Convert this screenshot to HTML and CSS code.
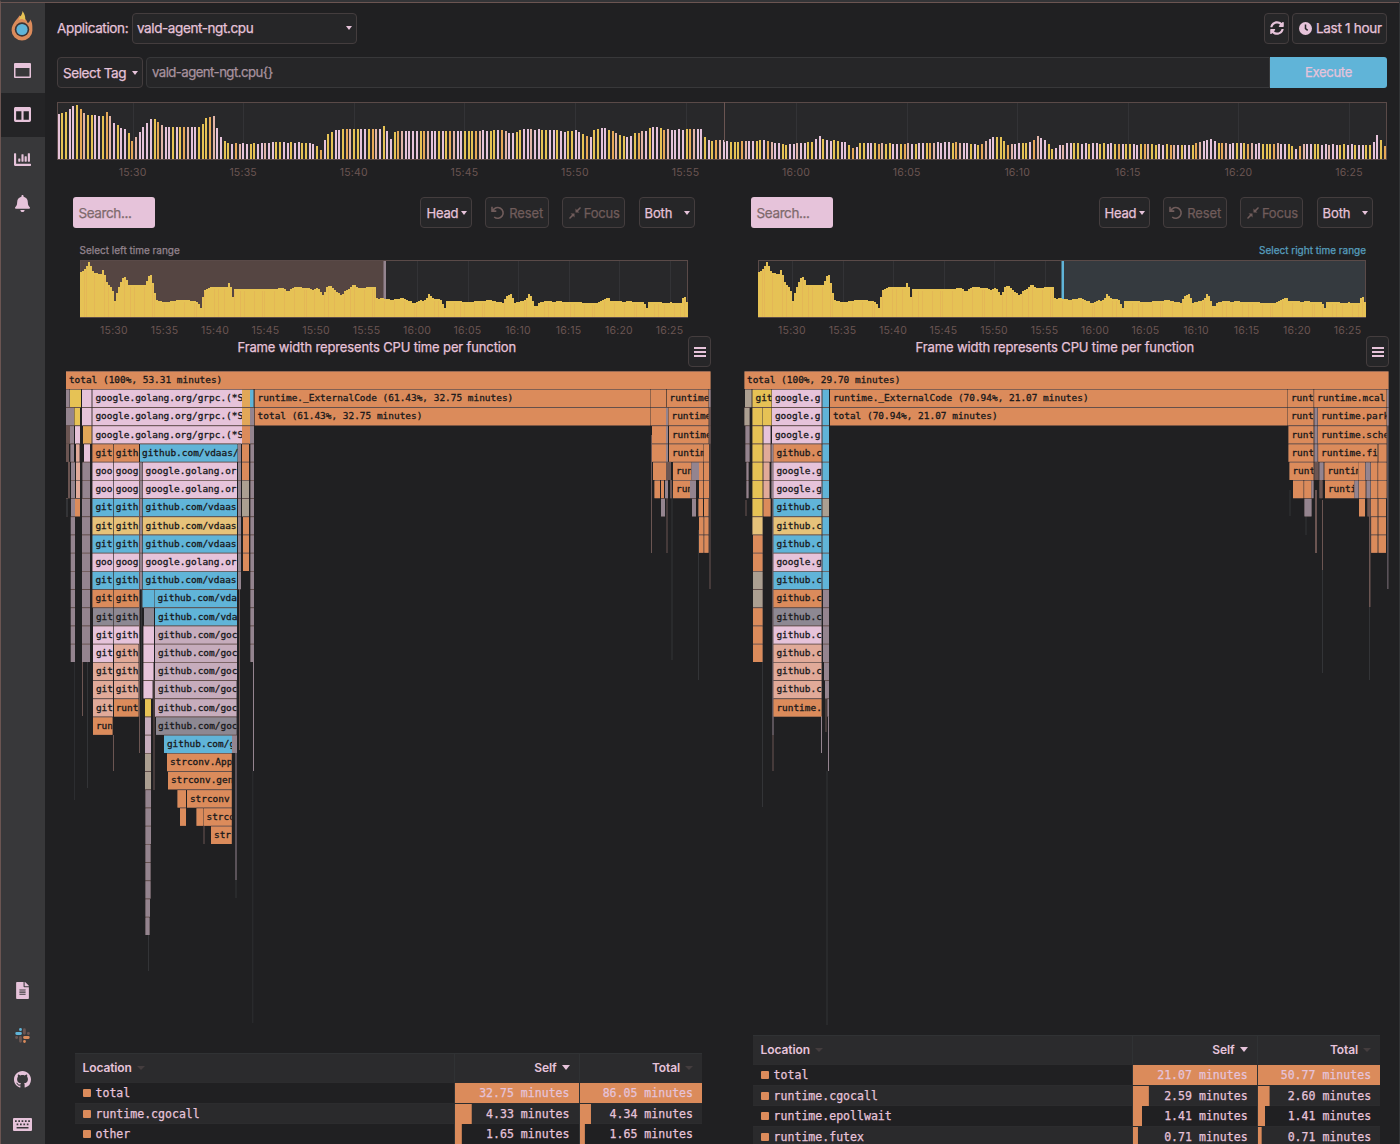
FILE: index.html
```html
<!DOCTYPE html>
<html lang="en">
<head>
<meta charset="utf-8">
<title>Pyroscope</title>
<link rel="stylesheet" href="styles.css">
</head>
<body>
<nav class="sidebar">
  <a class="side-item logo"><svg width="22" height="30" viewBox="0 0 22 30"><path class="o" d="M8.500 4.500C7 8 .6 12 .6 19.500a10.400 10 0 0 0 20.800 0c0-4 .3-8-2.200-11-.3 2-1.500 3.500-2.500 3.500C15.700 9 13.500 6 8.500 4.500z"/><path class="y" d="M11.500 0c2.500 3.500 3.300 6.500 2.500 9.500-2-2-4.500-2-6-.5C8.300 6.500 11.300 4 11.500 0z"/><circle class="d" cx="11" cy="18.500" r="7.200"/><circle class="b" cx="11" cy="18.500" r="5.600"/></svg></a>
  <a class="side-item"><svg width="17" height="15" viewBox="0 0 17 15"><path fill-rule="evenodd" d="M1 0h15a1 1 0 0 1 1 1v13a1 1 0 0 1-1 1H1a1 1 0 0 1-1-1V1a1 1 0 0 1 1-1zm.5 5v8.500h14V5z"/></svg></a>
  <a class="side-item active"><svg width="17" height="17" viewBox="0 0 512 512"><path d="M464 32H48C21.490 32 0 53.490 0 80v352c0 26.510 21.490 48 48 48h416c26.510 0 48-21.490 48-48V80c0-26.510-21.490-48-48-48zM224 416H64V160h160v256zm224 0H288V160h160v256z"/></svg></a>
  <a class="side-item"><svg width="17" height="17" viewBox="0 0 512 512"><path d="M332.800 320h38.400c6.400 0 12.800-6.400 12.800-12.800V172.800c0-6.400-6.400-12.800-12.800-12.800h-38.400c-6.400 0-12.800 6.400-12.800 12.800v134.400c0 6.400 6.400 12.800 12.800 12.800zm96 0h38.400c6.400 0 12.800-6.400 12.800-12.800V76.800c0-6.400-6.400-12.800-12.800-12.800h-38.400c-6.400 0-12.800 6.400-12.800 12.800v230.400c0 6.400 6.400 12.800 12.800 12.800zm-288 0h38.400c6.400 0 12.800-6.400 12.800-12.800v-70.400c0-6.400-6.400-12.800-12.800-12.800h-38.400c-6.400 0-12.800 6.400-12.800 12.800v70.400c0 6.400 6.400 12.800 12.800 12.800zm96 0h38.400c6.400 0 12.800-6.400 12.800-12.800V108.800c0-6.400-6.400-12.800-12.800-12.800h-38.400c-6.400 0-12.800 6.400-12.800 12.800v198.400c0 6.400 6.400 12.800 12.800 12.800zM496 384H64V80c0-8.840-7.160-16-16-16H16C7.160 64 0 71.160 0 80v336c0 17.670 14.330 32 32 32h464c8.840 0 16-7.160 16-16v-32c0-8.840-7.160-16-16-16z"/></svg></a>
  <a class="side-item"><svg width="15" height="17" viewBox="0 0 448 512"><path d="M224 512c35.320 0 63.970-28.650 63.970-64H160.030c0 35.350 28.650 64 63.970 64zm215.390-149.710c-19.320-20.760-55.470-51.990-55.470-154.290 0-77.700-54.480-139.900-127.940-155.160V32c0-17.670-14.320-32-31.980-32s-31.980 14.330-31.980 32v20.840C118.560 68.100 64.080 130.300 64.080 208c0 102.300-36.150 133.530-55.470 154.290-6 6.450-8.660 14.160-8.610 21.710.11 16.400 12.980 32 32.100 32h383.800c19.120 0 32-15.600 32.100-32 .05-7.550-2.610-15.270-8.610-21.710z"/></svg></a>
  <span class="side-space"></span>
  <a class="side-item"><svg width="13" height="17" viewBox="0 0 384 512"><path d="M224 136V0H24C10.700 0 0 10.700 0 24v464c0 13.300 10.700 24 24 24h336c13.300 0 24-10.700 24-24V160H248c-13.200 0-24-10.800-24-24zm64 236c0 6.600-5.400 12-12 12H108c-6.600 0-12-5.400-12-12v-8c0-6.600 5.400-12 12-12h168c6.600 0 12 5.400 12 12v8zm0-64c0 6.600-5.400 12-12 12H108c-6.600 0-12-5.400-12-12v-8c0-6.600 5.400-12 12-12h168c6.600 0 12 5.400 12 12v8zm0-72v8c0 6.600-5.400 12-12 12H108c-6.600 0-12-5.400-12-12v-8c0-6.600 5.400-12 12-12h168c6.600 0 12 5.400 12 12zm96-114.100v6.100H256V0h6.100c6.400 0 12.500 2.500 17 7l97.900 98c4.500 4.500 7 10.600 7 16.900z"/></svg></a>
  <a class="side-item"><svg width="15" height="15" viewBox="0 0 15 15"><g stroke-width="2.800" stroke-linecap="round" fill="none"><path class="sb" d="M5.500 5.500H1.700M5.500 1.500v.2"/><path class="sn" d="M9.400 5.300V1.700M13.300 5.500h.2M5.500 9.500v3.800M1.500 9.500h.2"/><path class="so" d="M9.500 9.500h3.800M9.500 13.300v.2"/></g></svg></a>
  <a class="side-item"><svg width="17" height="17" viewBox="0 0 16 16"><path d="M8 0C3.580 0 0 3.580 0 8c0 3.540 2.290 6.530 5.470 7.590.4.07.55-.17.55-.38 0-.19-.01-.82-.01-1.490-2.010.37-2.530-.49-2.690-.94-.09-.23-.48-.94-.82-1.130-.28-.15-.68-.52-.01-.53.63-.01 1.080.58 1.230.82.72 1.210 1.870.87 2.330.66.07-.52.28-.87.51-1.070-1.780-.2-3.640-.89-3.640-3.950 0-.87.31-1.590.82-2.150-.08-.2-.36-1.020.08-2.120 0 0 .67-.21 2.200.82.64-.18 1.320-.27 2-.27s1.360.09 2 .27c1.530-1.040 2.200-.82 2.200-.82.44 1.100.16 1.920.08 2.120.51.56.82 1.270.82 2.150 0 3.070-1.870 3.750-3.650 3.950.29.25.54.73.54 1.480 0 1.070-.01 1.930-.01 2.200 0 .21.15.46.55.38A8.010 8.010 0 0 0 16 8c0-4.420-3.580-8-8-8z"/></svg></a>
  <a class="side-item"><svg width="19" height="13" viewBox="0 0 19 13"><path fill-rule="evenodd" d="M1 0h17a1 1 0 0 1 1 1v11a1 1 0 0 1-1 1H1a1 1 0 0 1-1-1V1a1 1 0 0 1 1-1zM2 2.300v1.600h1.700V2.300zm3.300 0v1.600H7V2.300zm3.300 0v1.600h1.700V2.300zm3.300 0v1.600h1.700V2.300zm3.300 0v1.600h1.700V2.300zM3.600 5.600v1.600h1.700V5.600zm3.400 0v1.600h1.700V5.600zm3.400 0v1.600h1.700V5.600zm3.400 0v1.600h1.700V5.600zM3.600 9v1.600h11.900V9z"/></svg></a>
</nav>
<main class="page">
  <header class="bar">
    <span class="app-label">Application:</span>
    <div class="btn app-select">vald-agent-ngt.cpu<i class="caret"></i></div>
    <span class="grow"></span>
    <div class="btn refresh"><svg width="14" height="14" viewBox="0 0 512 512"><path d="M370.720 133.280C339.458 104.008 298.888 87.962 255.848 88c-77.458.068-144.328 53.178-162.791 126.850-1.344 5.363-6.122 9.150-11.651 9.150H24.103c-7.498 0-13.194-6.807-11.807-14.176C33.933 94.924 134.813 8 256 8c66.448 0 126.791 26.136 171.315 68.685L463.030 40.970C478.149 25.851 504 36.559 504 57.941V192c0 13.255-10.745 24-24 24H345.941c-21.382 0-32.090-25.851-16.971-40.971l41.750-41.749zM32 296h134.059c21.382 0 32.090 25.851 16.971 40.971l-41.750 41.750c31.262 29.273 71.835 45.319 114.876 45.280 77.418-.07 144.315-53.144 162.787-126.849 1.344-5.363 6.122-9.150 11.651-9.150h57.304c7.498 0 13.194 6.807 11.807 14.176C478.067 417.076 377.187 504 256 504c-66.448 0-126.791-26.136-171.315-68.685L48.970 471.030C33.851 486.149 8 475.441 8 454.059V320c0-13.255 10.745-24 24-24z"/></svg></div>
    <div class="btn range"><svg width="13" height="13" viewBox="0 0 13 13"><circle cx="6.500" cy="6.500" r="6.500"/><path class="hands" d="M6.500 2.500v4.200l2.200 1.700"/></svg>Last 1 hour</div>
  </header>
  <div class="bar query">
    <div class="btn tag">Select Tag<i class="caret"></i></div>
    <div class="query-input">vald-agent-ngt.cpu{}</div>
    <div class="execute">Execute</div>
  </div>
  <svg class="timeline-main" id="tl-main" width="1330" height="80"></svg>
  <div class="panels">
    <section class="panel">
      <div class="toolbar">
        <div class="search">Search...</div><span class="grow"></span>
        <div class="btn head">Head<i class="caret"></i></div>
        <div class="btn muted reset"><svg width="14" height="14" viewBox="0 0 14 14"><path class="line" d="M1.800 4.700A5.400 5.400 0 1 1 3.200 11M1 .8v4.300h4.300"/></svg>Reset</div>
        <div class="btn muted focus"><svg width="12" height="12" viewBox="0 0 12 12"><path d="M6.500 1.500v4h4L9 4.200 12 1 11 0 7.900 3zM5.500 10.500v-4h-4L3 7.800 0 11l1 1 3.100-3z"/></svg>Focus</div>
        <div class="btn both">Both<i class="caret"></i></div>
      </div>
      <div class="range-label">Select left time range</div>
      <svg class="timeline" id="tl-left" width="608" height="78"></svg>
      <div class="caption"><span>Frame width represents CPU time per function</span><div class="btn menu"><i></i><i></i><i></i></div></div>
      <svg class="flame" id="flame-left" width="646" height="682" viewBox="66 371 646 682"></svg>
      <div class="table">
        <div class="tr th"><div>Location<i class="sort off"></i></div><div>Self<i class="sort"></i></div><div>Total<i class="sort off"></i></div></div>
        <div class="tr"><div><b></b>total</div><div style="--v:100%">32.75 minutes</div><div style="--v:100%">86.05 minutes</div></div>
        <div class="tr alt"><div><b></b>runtime.cgocall</div><div style="--v:13.500%">4.33 minutes</div><div style="--v:9%">4.34 minutes</div></div>
        <div class="tr"><div><b></b>other</div><div style="--v:5.500%">1.65 minutes</div><div style="--v:4%">1.65 minutes</div></div>
      </div>
    </section>
    <section class="panel">
      <div class="toolbar">
        <div class="search">Search...</div><span class="grow"></span>
        <div class="btn head">Head<i class="caret"></i></div>
        <div class="btn muted reset"><svg width="14" height="14" viewBox="0 0 14 14"><path class="line" d="M1.800 4.700A5.400 5.400 0 1 1 3.200 11M1 .8v4.300h4.300"/></svg>Reset</div>
        <div class="btn muted focus"><svg width="12" height="12" viewBox="0 0 12 12"><path d="M6.500 1.500v4h4L9 4.200 12 1 11 0 7.900 3zM5.500 10.500v-4h-4L3 7.800 0 11l1 1 3.100-3z"/></svg>Focus</div>
        <div class="btn both">Both<i class="caret"></i></div>
      </div>
      <div class="range-label right">Select right time range</div>
      <svg class="timeline" id="tl-right" width="608" height="78"></svg>
      <div class="caption"><span>Frame width represents CPU time per function</span><div class="btn menu"><i></i><i></i><i></i></div></div>
      <svg class="flame" id="flame-right" width="646" height="664" viewBox="743.5 371 646 664"></svg>
      <div class="table">
        <div class="tr th"><div>Location<i class="sort off"></i></div><div>Self<i class="sort"></i></div><div>Total<i class="sort off"></i></div></div>
        <div class="tr"><div><b></b>total</div><div style="--v:100%">21.07 minutes</div><div style="--v:100%">50.77 minutes</div></div>
        <div class="tr alt"><div><b></b>runtime.cgocall</div><div style="--v:12.800%">2.59 minutes</div><div style="--v:9.500%">2.60 minutes</div></div>
        <div class="tr"><div><b></b>runtime.epollwait</div><div style="--v:7.500%">1.41 minutes</div><div style="--v:5.800%">1.41 minutes</div></div>
        <div class="tr alt"><div><b></b>runtime.futex</div><div style="--v:4%">0.71 minutes</div><div style="--v:3%">0.71 minutes</div></div>
      </div>
    </section>
  </div>
</main>
<script src="charts.js"></script>
</body>
</html>
```
FILE: styles.css
```css
* { box-sizing: border-box; }
body {
  margin: 0; width: 1400px; height: 1144px; overflow: hidden; display: flex;
  background: #202022; color: #e6c3da; fill: #e6c3da;
  border-top: 2px solid #333437; border-left: 1px solid #6b5552; border-right: 1px solid #303234;
  font: 13px Inter, "Liberation Sans", sans-serif; -webkit-text-stroke: .25px;
}
.sidebar { width: 44px; height: 1144.5px; flex: none; display: flex; flex-direction: column; background: #38383a; border-top: 1px solid #6b5552; }
.side-item { height: 44.5px; flex: none; display: flex; align-items: center; justify-content: center; padding-right: 2px; }
.side-item.logo { height: 45px; }
.side-item.active { background: #242426; }
.side-space { flex: 1; }
.o { fill: #db8b5b; } .y { fill: #e6c255; } .d { fill: #3a3436; } .b { fill: #60b4d8; }
.sb { stroke: #60b4d8; } .sn { stroke: #6b5552; } .so { stroke: #db8b5b; }
.page { flex: 1; min-width: 0; border-top: 1px solid #6b5552; padding: 10px 12px 0 12px; }
.bar { display: flex; height: 30px; align-items: center; }
.grow { flex: 1; }
.btn { display: flex; align-items: center; height: 31px; flex: none; border: 1px solid #443d3e; border-radius: 4px; background: #262628; white-space: nowrap; }
.caret { border: 3px solid transparent; border-top: 4px solid #e6c3da; border-bottom: 0; }
.app-label { width: 75px; font-size: 13.500px; letter-spacing: -.35px; }
.app-select { width: 225px; padding: 0 4px; justify-content: space-between; font-size: 13.500px; letter-spacing: -.4px; }
.refresh { width: 25px; justify-content: center; margin-right: 3px; }
.range { width: 95px; padding-left: 6px; gap: 4px; font-size: 13.500px; letter-spacing: -.3px; }
.hands { fill: none; stroke: #262628; stroke-width: 1.500; }
.query { margin-top: 14px; height: 31px; }
.tag { width: 86px; padding: 0 4px 0 5px; justify-content: space-between; margin-right: 3px; font-size: 13.500px; letter-spacing: -.4px; }
.query-input { flex: 1; height: 31px; line-height: 29px; padding-left: 5px; border: 1px solid #38383a; background: #262628; color: #a8929f; border-radius: 4px 0 0 4px; letter-spacing: -.55px; font-size: 13.200px; }
.execute { width: 117px; height: 31px; line-height: 31px; text-align: center; background: #60b4d8; border-radius: 0 3px 3px 0; letter-spacing: -.3px; }
.timeline-main { display: block; margin-top: 14px; }
.panels { display: grid; grid-template-columns: 645.500px 645.500px; column-gap: 32.600px; margin: 15px 0 0 8.500px; }
.toolbar { display: flex; height: 31px; padding: 0 16.500px 0 7px; gap: 13.200px; }
.search { width: 82px; height: 31px; line-height: 32px; border-radius: 3px; background: #e6c3da; color: #7e6a6c; padding-left: 6px; font-size: 13.500px; letter-spacing: -.4px; }
.head { width: 51.500px; padding: 0 4px 0 5px; justify-content: space-between; letter-spacing: -.2px; }
.reset { width: 63.500px; padding-left: 5px; gap: 4px; letter-spacing: -.1px; }
.focus { width: 63.500px; padding-left: 6px; gap: 3px; letter-spacing: -.2px; }
.both { width: 56px; padding: 0 4px 0 5px; justify-content: space-between; letter-spacing: -.1px; }
.muted { color: #705c5b; fill: #705c5b; }
.line { fill: none; stroke: #705c5b; stroke-width: 1.600; }
.range-label { height: 32px; padding: 15px 23px 0 14px; font-size: 10px; line-height: 14px; color: #94848f; }
.range-label.right { text-align: right; color: #60b4d8; opacity: .85; }
.timeline { display: block; margin-left: 14px; }
.caption { display: flex; height: 33px; letter-spacing: -.14px; }
.caption span { flex: 1; text-align: center; line-height: 19px; }
.menu { width: 23px; height: 31px; margin: -2px 0 0; flex-direction: column; justify-content: center; gap: 2px; }
.menu i { width: 12px; height: 2px; background: #e6c3da; }
.flame { display: block; }
.tick { font: 10.500px Inter, sans-serif; letter-spacing: .2px; fill: #6b5552; text-anchor: middle; }
.frame-text { font: 9.450px "DejaVu Sans Mono", monospace; fill: #18181a; stroke: #18181a; stroke-width: .3px; }
.table { width: 627.500px; margin-left: 9px; font: 11.550px "DejaVu Sans Mono", monospace; }
.tr { display: grid; grid-template-columns: 379.500px 124.500px 123.500px; height: 20.500px; line-height: 20px; border-bottom: 1px solid #2c2c2e; }
.tr > div + div { text-align: right; padding-right: 9px; border-left: 1px solid #303234; background: linear-gradient(#db8b5b, #db8b5b) left / var(--v, 0) 100% no-repeat; }
.tr > div:first-child { padding-left: 8px; }
.alt { background: #2a2a2c; }
.th { height: 30px; background: #2b2b2d; border-top: 1px solid #303234; font: 600 12px/28px Inter, sans-serif; letter-spacing: -.1px; -webkit-text-stroke: 0; }
.tr b { display: inline-block; width: 8px; height: 8px; margin-right: 5px; background: #db8b5b; border-radius: 1px; }
.sort { display: inline-block; margin-left: 5px; vertical-align: 2px; border: 4.500px solid transparent; border-top: 5px solid #e6c3da; border-bottom: 0; }
.sort.off { border-top-color: #443d3e; border-width: 4px 4px 0; }
```
FILE: charts.js
```js
const NS = 'http://www.w3.org/2000/svg';
function add(parent, tag, attrs, text) {
  const el = document.createElementNS(NS, tag);
  for (const k in attrs) el.setAttribute(k, attrs[k]);
  if (text) el.textContent = text;
  parent.appendChild(el);
  return el;
}

// CPU profile over the last hour: [offset, distance from the plot's top]
const profile = [[0,12],[4,9],[8,2],[11,9],[13,13],[21,14],[22,10],[24,15],[25,21],[30,27],[33,32],[34,41],[36,33],[40,22],[43,16],[46,20],[48,25],[65,25],[67,17],[71,14],[72,23],[75,38],[77,41],[88,42],[98,40],[115,41],[117,42],[120,48],[121,40],[124,30],[130,27],[147,27],[148,23],[150,27],[152,37],[154,29],[193,29],[203,28],[207,32],[213,27],[228,28],[232,30],[237,28],[243,36],[245,28],[249,25],[253,29],[261,36],[263,31],[268,29],[273,24],[277,28],[290,27],[294,27],[296,38],[299,39],[302,38],[310,40],[322,38],[333,43],[337,41],[345,40],[348,34],[351,38],[360,40],[364,48],[366,41],[387,42],[410,40],[422,43],[425,37],[430,34],[433,40],[434,43],[445,40],[448,34],[451,38],[453,43],[455,49],[457,43],[463,41],[490,42],[517,43],[527,37],[530,41],[563,42],[566,48],[568,42],[600,43],[602,38],[603,32],[604,37],[606,42],[607,49],[609,49]];
function topAt(x) {
  for (let i = 1; i < profile.length; i++) {
    const [a, b] = [profile[i - 1], profile[i]];
    if (x <= b[0]) return a[1] + (b[1] - a[1]) * (x - a[0]) / (b[0] - a[0]);
  }
  return 49;
}
const labels = ['15:30','15:35','15:40','15:45','15:50','15:55','16:00','16:05','16:10','16:15','16:20','16:25'];

function timeline(id, width, first, step, bar, sel) {
  const svg = document.getElementById(id);
  add(svg, 'rect', {x: .5, y: .5, width: width - 1, height: 57, fill: '#28282a', stroke: '#5a4a48'});
  if (sel) add(svg, 'rect', {x: sel[0], y: 1, width: sel[1] - sel[0], height: 56, fill: sel[2]});
  labels.forEach((t, i) => {
    const x = first + step * i;
    add(svg, 'rect', {x: Math.round(x), y: 1, width: 1, height: 56, fill: sel && x > sel[0] && x < sel[1] ? sel[2] : '#333336'});
    add(svg, 'text', {x, y: 74, class: 'tick'}, t);
  });
  if (sel) add(svg, 'rect', {x: sel[4], y: 1, width: 2.5, height: 56, fill: sel[3]});
  if (bar) {
    const pitch = width / 360, cols = ['#e6c3da', '#e6c255', '#e6c3da', '#e6a857', '#e6c3da', '#e6c255', '#e6c3da', '#e6c255', '#e0b4a8'];
    for (let i = 0; i < 360; i++) {
      const y = Math.round(topAt(i / 360 * 608) + ((i * 7) % 5 - 2) * .2);
      add(svg, 'rect', {x: Math.round(i * pitch + .5), y, width: 2, height: 57 - y, fill: cols[(i * 5 + (i >> 3)) % 9]});
    }
    add(svg, 'rect', {x: 667, y: 0, width: 1, height: 40, fill: '#6b5552'});
    return;
  }
  // Filled silhouette in two-pixel steps, with faint sample seams
  let d = 'M0 57';
  const steps = [];
  for (let x = 0; x < width; x += 2) {
    const y = Math.round(topAt(x) + ((x * 7) % 5 - 2) * .1);
    d += `V${y}h2`;
    steps.push(y);
  }
  add(svg, 'path', {d: d + 'V57z', fill: '#e6c255'});
  steps.forEach((y, i) => {
    if (i % 5 === 2 || i % 11 === 3) add(svg, 'rect', {x: i * 2, y: y + 2, width: 1, height: 55 - y, fill: '#e2ab58', opacity: .5});
  });
}
timeline('tl-main', 1330, 75.600, 110.58, true);
timeline('tl-left', 608, 34, 50.5, false, [1, 305, '#554542', '#94848f', 303.5]);
timeline('tl-right', 608, 34, 50.5, false, [305, 607, '#353a3f', '#60b4d8', 303.5]);

// Frames per row: "x1 x2 colour text", separated by "|"
const colour = {o:'#db8b5b', p:'#e6c3da', b:'#60b4d8', y:'#e6c255', g:'#94848f', n:'#6b5552', k:'#333437', m:'#ab9f91', q:'#e1aa99', c:'#c6acbc', h:'#8d8892', z:'#e6c27a', a:'#e1a758'};
function flame(id, rows, lines) {
  const svg = document.getElementById(id);
  lines.forEach(([x, y1, y2, c, w]) => add(svg, 'rect', {x, y: y1, width: w || 1, height: y2 - y1, fill: colour[c]}));
  rows.forEach((row, n) => {
    const y = 371.6 + n * 18.2;
    row.split('|').forEach(f => {
      const m = f.match(/^([\d.]+) ([\d.]+) (\w)(?:@([\d.]+))? ?(.*)$/);
      const x = +m[1], w = m[2] - m[1];
      add(svg, 'rect', {x, y: y - .8, width: w, height: 18.2, fill: '#6b5552'});
      add(svg, 'rect', {x, y, width: w, height: 17.4, fill: colour[m[3]]});
      if (m[5]) {
        const box = add(svg, 'svg', {x, y, width: w, height: 18, overflow: 'hidden'});
        add(box, 'text', {x: m[4] ? m[4] - x : 2.9, y: 11.4, class: 'frame-text'}, m[5]);
      }
    });
  });
}
const G = '|250.5 254 g', E = '|92.5 242 p google.golang.org/grpc.(*S', D = '70.8 75 g|82 90 g|';
const mid = (c, t, u) => `92.5 113 ${c} ${t.slice(0, 3)}|113.7 139 ${c}@115.7 ${t}|140 142 g|142.7 237 ${c} ${u}|238 241 g`;
const gh = 'github.com/vdaas', gg = 'google.golang.or';
flame('flame-left', [
  '66 710.5 o total (100%, 53.31 minutes)',
  '66 69.5 g|70 81 y|82 91.5 p' + E + '|242 250 a|250 253.500 b|254.7 650.500 o runtime._ExternalCode (61.43%, 32.75 minutes)|651 666 o|666.7 708.500 o runtime|709 710.500 g',
  '66 74 g|74.5 80 y|82 91.5 p' + E + '|242 250 a|250 254 g|254.7 650.500 o total (61.43%, 32.75 minutes)|651 666 o|666 668 g|668.5 708.500 o@671.5 runtime|709 710.500 n',
  '66 70 n|70 74 g|75 80 p|83 91.500 a' + E + '|242 250 o|250 254 g|652 666 o|666 668 g|669 708.500 o runtime|709 710.500 n',
  '66 69 n|70.5 74 g|76 79.500 q|84 90 p|92.5 113 o git|113.7 139 o@115.7 gith|140 237.500 b@142 github.com/vdaas/|238 241 g|242 249 o' + G + '|652 666 o|666 668 g|669 703.500 o runtim|704 709 o',
  '68 70 n|71 75 g|76 80 q|82.5 90 g|' + mid('p', 'goog', gg) + '|242 249 o' + G + '|653 666 o|666 671 n|673 691.500 o run|691.5 699 g|699 703 o|703.7 709 o',
  '68 70 n|71 75 g|76 80 q|82.5 90 g|' + mid('p', 'goog', gg) + '|242 249 m' + G + '|654.5 660 o|661 664 o|665 668 g|670 672 n|673 690 o@676 run|690 696 g|699 703 o|703.7 709 o',
  '66 68 k|71 75 g|75 80 o|82 90 g|' + mid('b', 'gith', gh) + '|242 249 m' + G + '|661 665 g|692 696 g|698.5 703 o|704 708.500 o',
  D + mid('z', 'gith', gh) + '|243 249 o' + G + '|699 703.500 o|704.3 708.500 o',
  D + mid('b', 'gith', gh) + '|243 249 o' + G + '|699 703.500 o|704.3 708.500 o',
  D + mid('p', 'goog', gg) + '|243 249 o' + G,
  D + mid('b', 'gith', gh) + G,
  D + '92.5 113 o git|113.7 139 o@115.7 gith|142.5 154 b|154.5 237 b github.com/vda' + G,
  D + '93 113 h git|113.7 139 h@115.7 gith|144 154 h|155 237 b github.com/vda' + G,
  D + '93 113 p git|113.7 139 p@115.7 gith|143.5 154 p|155 237 c github.com/goc' + G,
  D + '93 113 p git|114 138.500 q@115.7 gith|143.5 154 p|155 237 c github.com/goc' + G,
  '93 113 q git|114 138.500 q@115.7 gith|143.5 153.500 p|155 237 c github.com/goc',
  '93 113 q git|114 138.500 q@115.7 gith|143.5 152.500 p|155 236.500 c github.com/goc',
  '93 113 q git|114 138.500 o@115.7 runt|145 151 y|155 236.500 c github.com/goc',
  '93 112.500 o run|145 151 c|156 236.500 h@158 github.com/goc',
  '145 151 c|164 232 b github.com/g|232 237 g',
  '145 151 m|167 231.700 o strconv.App', '145 151 m|168 231.700 o strconv.gen',
  '145.5 151 g|177.5 186 o|187 231.700 o strconv', '145.5 151 g|180 186 o|196.5 203.500 o|204 231.700 o@206.5 strco',
  '145.5 151 g|211 231.700 o@214 str', '145.5 150.500 g', '145.5 150.500 g', '145.5 150.500 g', '145.5 150 g', '145.5 149.500 g'
], [[148,935,971,'k'],[235.5,753,880,'g'],[235.5,880,898,'k'],[253,661,771,'g'],[252.5,771,1023,'k',.7],[82,661,716,'n'],[74,661,800,'k',.7],[87,661,788,'k'],[113,735,771,'n'],[139,462,753,'n'],[141,570,700,'k'],[153.5,680,790,'n'],[203.500,826,844,'n'],[239,571,750,'n'],[651,435,553,'n'],[666.5,490,553,'n'],[671.5,490,660,'k'],[698,530,680,'k'],[709.500,389,589,'n']]);

const R = '752 762 y|', B = '|822 828.500 b';
const core = (c, t) => `773 821 ${c} ${t}`;
flame('flame-right', [
  '744 1388 o@746.5 total (100%, 29.70 minutes)',
  '744.5 751 m|752 771 y@755 git|771.5 821 p google.g' + B + '|829.5 1287 o runtime._ExternalCode (70.94%, 21.07 minutes)|1287.5 1313 o runt|1313.7 1386 o runtime.mcal|1386.5 1388 g',
  '744 749 m|752 762 y|762.5 771 y|771.5 821 p google.g' + B + '|829.5 1287 o total (70.94%, 21.07 minutes)|1287.5 1313 o runt|1314 1317 g|1317.5 1386 o runtime.park|1386.5 1388 g',
  '745 749 g|' + R + '763 770 p|771.5 821 p google.g' + B + '|1288 1313 o runt|1314 1317 g|1317.5 1386 o runtime.sche',
  '745 749 g|' + R + '763 770 q|771 773 g|' + core('o', 'github.c') + B + '|1288 1313 o runt|1314 1317 g|1317.7 1377 o runtime.fi|1378 1386 o',
  '746 748 g|' + R + '763 769 q|771 773 g|' + core('p', 'google.g') + B + '|1289 1313 o runt|1314 1318 n|1319 1323 g|1324 1358 o runtim|1358 1364.5 o|1365 1370 g|1370.5 1377 o|1377.7 1386 o',
  '746 748 g|' + R + '763 769 q|771 773 g|' + core('p', 'google.g') + B + '|1292.5 1303 o|1303.7 1311 o|1311 1313 g|1319 1322 n|1324.5 1354 o runti|1354 1358 g|1358.5 1365 o|1366 1370 g|1370.5 1377 o|1377.7 1386 o',
  R + '763 770 o|' + core('b', 'github.c') + '|822 828.500 m|1304 1311 g|1358.5 1364.500 o|1367 1370 n|1370.5 1377 o|1378 1385.500 o',
  '752 762 z|' + core('z', 'github.c') + B + '|1370.7 1377 o|1378 1385.500 o',
  '752.5 762 o|' + core('b', 'github.c') + B + '|1370.7 1377 o|1378 1385.500 o',
  '752.5 762 o|' + core('p', 'google.g') + B,
  '752.5 762 m|' + core('b', 'github.c') + B,
  '752.5 762 m|' + core('o', 'github.c') + '|822.5 828.500 g',
  '752.5 762 o|' + core('h', 'github.c') + '|822.5 828.500 g',
  '752.5 762 o|' + core('p', 'github.c') + '|822.5 828.500 g',
  '752.5 762 o|' + core('q', 'github.c') + '|822.5 828.500 g',
  core('q', 'github.c') + '|823.5 828.500 g', core('q', 'github.c') + '|824.5 828.500 g', core('o', 'runtime.') + '|827 828.500 g'
], [[745,500,516,'n'],[761.500,516,807,'k'],[772,445,735,'g'],[772,735,771,'n'],[820.500,716,753,'g'],[827.500,710,771,'g'],[826,771,1025,'k'],[825,680,732,'n'],[1289,490,516,'k'],[1305,516,535,'k'],[1314.5,490,553,'n',2],[1321.5,500,570,'n'],[1321.5,570,673,'k'],[1368.500,500,607,'n',1.5],[1368.500,607,680,'k'],[1387,389,589,'g',.8]]);
```
